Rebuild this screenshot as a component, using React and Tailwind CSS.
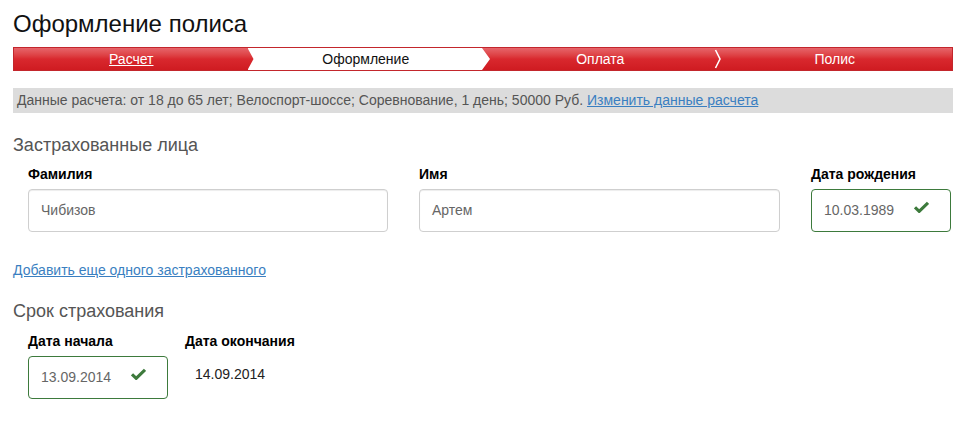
import React from "react";

function Check() {
  return (
    <svg width="15" height="12" viewBox="0 0 15 12" className="shrink-0 mb-[7px]">
      <path d="M1 6.3 L5.2 10.3 L14 1.8" fill="none" stroke="#3d7a3c" strokeWidth="3.2" strokeLinejoin="miter" />
    </svg>
  );
}

function TextInput({ value, width }) {
  return (
    <div
      className={`${width} h-[43px] flex items-center pl-[12px] rounded-[4px] border border-[#cfcfcf] bg-white shadow-[inset_0_1px_1px_rgba(0,0,0,0.075)] text-[14px] text-[#666]`}
    >
      {value}
    </div>
  );
}

function DateInput({ value }) {
  return (
    <div className="w-[140px] h-[43px] flex items-center pl-[12px] pr-[21px] justify-between rounded-[4px] border border-[#3d7a3c] bg-white text-[14px] text-[#666]">
      <span>{value}</span>
      <Check />
    </div>
  );
}

function Label({ children }) {
  return <div className="text-[14px] leading-[16px] font-bold text-black">{children}</div>;
}

function Steps() {
  return (
    <div className="mt-[9px] mr-[24px] h-[24px] flex border border-[#c3262c] bg-gradient-to-b from-[#e6646a] via-[#d9282e] to-[#cf1b21] text-[14px] leading-[22px]">
      <div className="flex-1 text-center text-white underline">Расчет</div>
      <div className="flex-1 relative text-center text-[#111]">
        <div className="absolute top-0 bottom-0 left-[-1px] right-[-7px] bg-white [clip-path:polygon(0_0,calc(100%_-_8px)_0,100%_50%,calc(100%_-_8px)_100%,0_100%,6px_50%)]" />
        <span className="relative">Оформление</span>
      </div>
      <div className="flex-1 relative text-center text-white">
        Оплата
        <svg width="8" height="22" viewBox="0 0 8 22" className="absolute right-[-4px] top-0">
          <path d="M1.5 2 L6 11 L1.5 20" fill="none" stroke="#fff" strokeWidth="1.6" />
        </svg>
      </div>
      <div className="flex-1 text-center text-white">Полис</div>
    </div>
  );
}

export default function App() {
  return (
    <div className="w-[977px] h-[430px] bg-white pl-[13px] font-['Liberation_Sans',Arial,sans-serif] overflow-hidden">
      <h1 className="pt-[10px] text-[24px] leading-[28px] text-[#111]">Оформление полиса</h1>

      <Steps />

      <div className="mt-[17px] mr-[24px] h-[25px] bg-[#dcdcdc] pl-[4px] text-[14px] leading-[25px] text-[#555]">
        Данные расчета: от 18 до 65 лет; Велоспорт-шоссе; Соревнование, 1 день; 50000 Руб.{" "}
        <a href="#" className="text-[#3a7fc1] underline">Изменить данные расчета</a>
      </div>

      <h2 className="mt-[21px] text-[18px] leading-[22px] text-[#555]">Застрахованные лица</h2>

      <div className="mt-[10px] ml-[15px] flex gap-[31px]">
        <div className="flex flex-col gap-[7px]">
          <Label>Фамилия</Label>
          <TextInput value="Чибизов" width="w-[360px]" />
        </div>
        <div className="flex flex-col gap-[7px]">
          <Label>Имя</Label>
          <TextInput value="Артем" width="w-[361px]" />
        </div>
        <div className="flex flex-col gap-[7px]">
          <Label>Дата рождения</Label>
          <DateInput value="10.03.1989" />
        </div>
      </div>

      <div className="mt-[30px] text-[14px] leading-[16px]">
        <a href="#" className="text-[#3a7fc1] underline">Добавить еще одного застрахованного</a>
      </div>

      <h2 className="mt-[22px] text-[18px] leading-[22px] text-[#555]">Срок страхования</h2>

      <div className="mt-[11px] ml-[15px] flex gap-[17px]">
        <div className="flex flex-col gap-[7px]">
          <Label>Дата начала</Label>
          <DateInput value="13.09.2014" />
        </div>
        <div className="flex flex-col gap-[7px]">
          <Label>Дата окончания</Label>
          <div className="pl-[10px] pt-[10px] text-[14px] leading-[16px] text-[#222]">14.09.2014</div>
        </div>
      </div>
    </div>
  );
}
